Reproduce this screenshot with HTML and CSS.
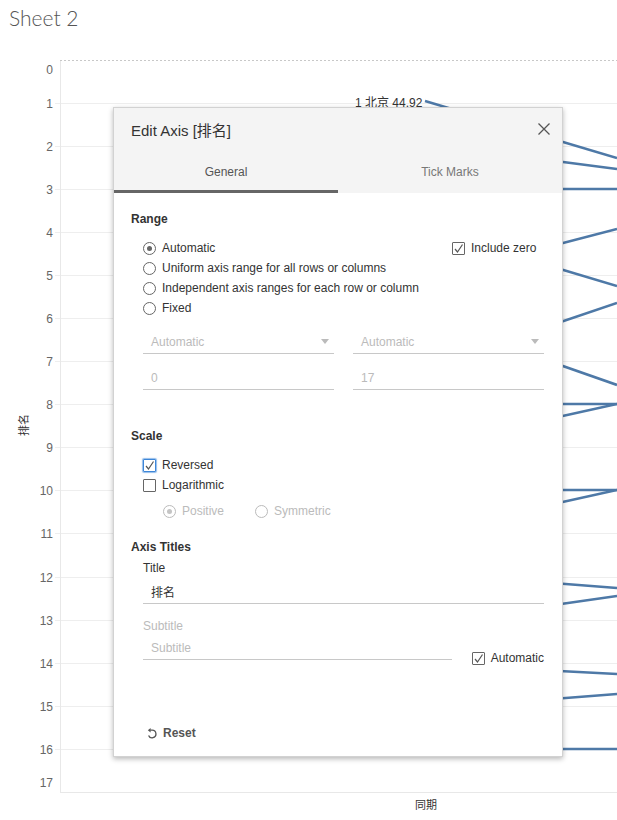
FILE: index.html
```html
<!DOCTYPE html>
<html>
<head>
<meta charset="utf-8">
<link rel="stylesheet" href="styles.css">
</head>
<body>
<div class="sheet">
  <h1 class="sheet-title">Sheet 2</h1>

  <svg class="chart" width="617" height="820" viewBox="0 0 617 820">
    <g class="grid">
      <line x1="55" y1="103.5" x2="617" y2="103.5"/>
      <line x1="55" y1="146.5" x2="617" y2="146.5"/>
      <line x1="55" y1="189.5" x2="617" y2="189.5"/>
      <line x1="55" y1="232.5" x2="617" y2="232.5"/>
      <line x1="55" y1="275.5" x2="617" y2="275.5"/>
      <line x1="55" y1="318.5" x2="617" y2="318.5"/>
      <line x1="55" y1="361.5" x2="617" y2="361.5"/>
      <line x1="55" y1="404.5" x2="617" y2="404.5"/>
      <line x1="55" y1="447.5" x2="617" y2="447.5"/>
      <line x1="55" y1="490.5" x2="617" y2="490.5"/>
      <line x1="55" y1="533.5" x2="617" y2="533.5"/>
      <line x1="55" y1="577.5" x2="617" y2="577.5"/>
      <line x1="55" y1="620.5" x2="617" y2="620.5"/>
      <line x1="55" y1="663.5" x2="617" y2="663.5"/>
      <line x1="55" y1="706.5" x2="617" y2="706.5"/>
      <line x1="55" y1="749.5" x2="617" y2="749.5"/>
    </g>
    <line class="pane-edge" x1="60.5" y1="60" x2="60.5" y2="793"/>
    <line class="pane-edge" x1="60" y1="792.5" x2="617" y2="792.5"/>
    <line class="pane-top" x1="60" y1="60.5" x2="617" y2="60.5"/>

    <g class="ticks">
      <text x="53" y="70">0</text>
      <text x="53" y="103.5">1</text>
      <text x="53" y="146.5">2</text>
      <text x="53" y="189.5">3</text>
      <text x="53" y="232.5">4</text>
      <text x="53" y="275.5">5</text>
      <text x="53" y="318.5">6</text>
      <text x="53" y="361.5">7</text>
      <text x="53" y="404.5">8</text>
      <text x="53" y="447.5">9</text>
      <text x="53" y="490.5">10</text>
      <text x="53" y="533.5">11</text>
      <text x="53" y="577.5">12</text>
      <text x="53" y="620.5">13</text>
      <text x="53" y="663.5">14</text>
      <text x="53" y="706.5">15</text>
      <text x="53" y="749.5">16</text>
      <text x="53" y="783">17</text>
    </g>
    <text class="axis-title" transform="translate(23 425) rotate(-90)">排名</text>
    <text class="axis-title x" x="426" y="804">同期</text>
    <text class="mark-label" x="355" y="103">1 北京 44.92</text>

    <g class="series">
      <line x1="425" y1="101" x2="617" y2="158"/>
      <line x1="540" y1="159" x2="617" y2="169"/>
      <line x1="540" y1="189" x2="617" y2="189"/>
      <line x1="540" y1="249" x2="617" y2="229"/>
      <line x1="540" y1="263" x2="617" y2="286"/>
      <line x1="540" y1="329" x2="617" y2="303"/>
      <line x1="540" y1="358" x2="617" y2="385"/>
      <line x1="540" y1="404" x2="617" y2="404"/>
      <line x1="540" y1="421" x2="617" y2="404"/>
      <line x1="540" y1="490" x2="617" y2="490"/>
      <line x1="540" y1="507" x2="617" y2="490"/>
      <line x1="540" y1="582" x2="617" y2="588"/>
      <line x1="540" y1="607" x2="617" y2="596"/>
      <line x1="540" y1="670" x2="617" y2="674"/>
      <line x1="540" y1="700" x2="617" y2="694"/>
      <line x1="540" y1="749" x2="617" y2="749"/>
    </g>
  </svg>

  <div class="dialog">
    <div class="dlg-head">
      <div class="dlg-titlebar">
        <span class="dlg-title">Edit Axis [排名]</span>
        <svg class="close" width="12" height="12" viewBox="0 0 12 12"><path d="M0.5 0.5 L11.5 11.5 M11.5 0.5 L0.5 11.5"/></svg>
      </div>
      <div class="tabs">
        <div class="tab active">General</div>
        <div class="tab">Tick Marks</div>
      </div>
    </div>

    <div class="dlg-body">
      <div class="section-title">Range</div>
      <div class="range-opts">
        <div class="opt-list">
          <div class="opt"><span class="radio checked"></span>Automatic</div>
          <div class="opt"><span class="radio"></span>Uniform axis range for all rows or columns</div>
          <div class="opt"><span class="radio"></span>Independent axis ranges for each row or column</div>
          <div class="opt"><span class="radio"></span>Fixed</div>
        </div>
        <div class="opt"><span class="check"><svg width="11" height="11" viewBox="0 0 11 11"><polyline points="2,6 4.5,9 9.5,1.5"/></svg></span>Include zero</div>
      </div>

      <div class="field-grid">
        <div class="field disabled"><span>Automatic</span><span class="caret"></span></div>
        <div class="field disabled"><span>Automatic</span><span class="caret"></span></div>
        <div class="field disabled"><span>0</span></div>
        <div class="field disabled"><span>17</span></div>
      </div>

      <div class="section-title scale-title">Scale</div>
      <div class="scale-opts">
        <div class="opt"><span class="check focus"><svg width="11" height="11" viewBox="0 0 11 11"><polyline points="2,6 4.5,9 9.5,1.5"/></svg></span>Reversed</div>
        <div class="opt"><span class="check"></span>Logarithmic</div>
        <div class="sub-opts">
          <div class="opt disabled positive"><span class="radio checked"></span>Positive</div>
          <div class="opt disabled"><span class="radio"></span>Symmetric</div>
        </div>
      </div>

      <div class="section-title axis-titles">Axis Titles</div>
      <div class="field-label">Title</div>
      <div class="field wide"><span>排名</span></div>
      <div class="field-label disabled sub-label">Subtitle</div>
      <div class="subtitle-row">
        <div class="field sub-field disabled"><span>Subtitle</span></div>
        <div class="opt auto"><span class="check"><svg width="11" height="11" viewBox="0 0 11 11"><polyline points="2,6 4.5,9 9.5,1.5"/></svg></span>Automatic</div>
      </div>

      <div class="reset">
        <svg width="10" height="11" viewBox="0 0 10 11"><path class="reset-arc" d="M3.2 2.2 H5.2 A3.8 3.8 0 1 1 1.6 7.4"/><polygon class="reset-head" points="0.8,2.2 3.6,0 3.6,4.4"/></svg>
        <span>Reset</span>
      </div>
    </div>
  </div>
</div>
</body>
</html>
```

FILE: styles.css
```css
html, body {
  margin: 0;
  padding: 0;
  background: #fff;
}

body {
  font-family: "Liberation Sans", Arial, "Noto Sans CJK SC", sans-serif;
  font-size: 12px;
  color: #333;
}

.sheet {
  position: relative;
  width: 617px;
  height: 820px;
  overflow: hidden;
}

.sheet-title {
  margin: 0;
  padding: 6px 9px;
  font-family: "Lato", "Open Sans", sans-serif;
  font-weight: 300;
  font-size: 21px;
  line-height: 24px;
  color: #555;
}

.chart {
  position: absolute;
  left: 0;
  top: 0;
}

.grid line {
  stroke: #eeeeee;
  stroke-width: 1;
}

.pane-edge {
  stroke: #e8e8e8;
  stroke-width: 1;
}

.pane-top {
  stroke: #c8c8c8;
  stroke-width: 1;
  stroke-dasharray: 2 2;
}

.ticks text {
  font-family: "Liberation Sans", Arial, sans-serif;
  font-size: 12px;
  fill: #666;
  text-anchor: end;
  dominant-baseline: central;
}

.axis-title {
  font-family: "Noto Sans CJK SC", sans-serif;
  font-size: 11px;
  fill: #333;
  text-anchor: middle;
  dominant-baseline: central;
}

.mark-label {
  font-family: "Liberation Sans", "Noto Sans CJK SC", sans-serif;
  font-size: 12px;
  fill: #333;
  dominant-baseline: central;
}

.series line {
  stroke: #4e79a7;
  stroke-width: 2.6;
}

/* dialog */
.dialog {
  position: absolute;
  left: 113px;
  top: 107px;
  width: 450px;
  height: 650px;
  box-sizing: border-box;
  border: 1px solid #d2d2d2;
  background: #fff;
  box-shadow: 0 2px 5px rgba(0, 0, 0, 0.28);
  display: flex;
  flex-direction: column;
}

.dlg-head {
  background: #f4f4f4;
}

.dlg-titlebar {
  height: 45px;
  box-sizing: border-box;
  display: flex;
  align-items: center;
  justify-content: space-between;
  padding: 0 12px 3px 17px;
}

.dlg-title {
  font-size: 15px;
  color: #333;
  font-family: "Liberation Sans", Arial, "Noto Sans CJK SC", sans-serif;
}

.close path {
  stroke: #555;
  stroke-width: 1.3;
  fill: none;
}

.tabs {
  display: flex;
  height: 40px;
}

.tab {
  flex: 1;
  display: flex;
  align-items: center;
  justify-content: center;
  box-sizing: border-box;
  padding-top: 1px;
  border-bottom: 3px solid transparent;
  color: #777;
  font-size: 12px;
}

.tab.active {
  border-bottom-color: #666;
  color: #555;
}

.dlg-body {
  flex: 1;
  padding: 19px 18px 0 17px;
}

.section-title {
  font-weight: bold;
  line-height: 14px;
  color: #333;
}

.range-opts {
  margin-top: 12px;
  padding-left: 12px;
  display: grid;
  grid-template-columns: 309px auto;
  align-items: start;
}

.opt {
  display: flex;
  align-items: center;
  gap: 6px;
  height: 20px;
  color: #333;
}

.opt.disabled {
  color: #bbb;
}

.radio {
  width: 13px;
  height: 13px;
  box-sizing: border-box;
  border: 1px solid #666;
  border-radius: 50%;
  display: flex;
  align-items: center;
  justify-content: center;
  background: #fff;
  flex: none;
}

.radio.checked::after {
  content: "";
  width: 5px;
  height: 5px;
  border-radius: 50%;
  background: #666;
}

.opt.disabled .radio {
  border-color: #bbb;
}

.opt.disabled .radio.checked::after {
  background: #c4c4c4;
}

.check {
  width: 13px;
  height: 13px;
  box-sizing: border-box;
  border: 1px solid #666;
  border-radius: 1px;
  display: flex;
  align-items: center;
  justify-content: center;
  background: #fff;
  flex: none;
}

.check svg polyline {
  fill: none;
  stroke: #555;
  stroke-width: 1.2;
}

.check.focus {
  border-color: #3d86d8;
  box-shadow: 0 0 1px 1px rgba(61, 134, 216, 0.55);
}

.field-grid {
  margin: 12px 0 0 12px;
  display: grid;
  grid-template-columns: 191px 191px;
  column-gap: 19px;
  row-gap: 12px;
}

.field {
  height: 24px;
  box-sizing: border-box;
  border-bottom: 1px solid #c8c8c8;
  padding: 0 5px 0 8px;
  display: flex;
  align-items: center;
  justify-content: space-between;
  color: #333;
}

.field.disabled {
  color: #bbb;
}

.caret {
  width: 0;
  height: 0;
  border-left: 4px solid transparent;
  border-right: 4px solid transparent;
  border-top: 5px solid #bbb;
}

.scale-title {
  margin-top: 39px;
}

.scale-opts {
  margin-top: 12px;
  padding-left: 12px;
  display: flex;
  flex-direction: column;
  gap: 0;
}

.sub-opts {
  display: flex;
  margin-top: 6px;
  padding-left: 20px;
}

.sub-opts .positive {
  width: 92px;
}

.axis-titles {
  margin-top: 19px;
}

.field-label {
  margin: 7px 0 0 12px;
  line-height: 14px;
  color: #333;
}

.field-label.disabled {
  color: #bbb;
}

.field.wide {
  margin: 5px 0 0 12px;
  width: 401px;
}

.field-label.sub-label {
  margin-top: 15px;
}

.subtitle-row {
  display: flex;
  margin: 3px 0 0 12px;
}

.sub-field {
  width: 309px;
}

.opt.auto {
  margin: 12px 0 0 20px;
}

.reset {
  margin: 55px 0 0 16px;
  height: 20px;
  display: flex;
  align-items: center;
  gap: 6px;
  font-weight: bold;
  color: #555;
}

.reset-arc {
  fill: none;
  stroke: #555;
  stroke-width: 1.3;
}

.reset-head {
  fill: #555;
}
```
